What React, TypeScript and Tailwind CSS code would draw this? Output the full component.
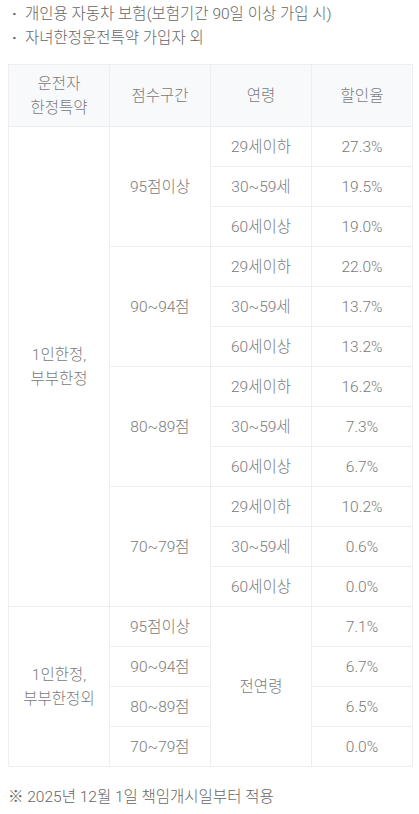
const FONT = "font-['Roboto','Noto_Sans_CJK_KR',sans-serif]";

type Row = { age: string; rate: string };
type Band = { score: string; rows: Row[] };

const ages = ["29세이하", "30~59세", "60세이상"];

const limitedBands: Band[] = [
  { score: "95점이상", rates: ["27.3%", "19.5%", "19.0%"] },
  { score: "90~94점", rates: ["22.0%", "13.7%", "13.2%"] },
  { score: "80~89점", rates: ["16.2%", "7.3%", "6.7%"] },
  { score: "70~79점", rates: ["10.2%", "0.6%", "0.0%"] },
].map(({ score, rates }) => ({
  score,
  rows: rates.map((rate, i) => ({ age: ages[i], rate })),
}));

const otherRows = [
  { score: "95점이상", rate: "7.1%" },
  { score: "90~94점", rate: "6.7%" },
  { score: "80~89점", rate: "6.5%" },
  { score: "70~79점", rate: "0.0%" },
];

const cell = "border border-[#eceef2] text-center align-middle h-10 p-0 font-light";

export default function App() {
  return (
    <div className={`${FONT} font-light bg-white text-[#7a7a7a] w-[419px] min-h-[814px] px-2 pt-[2px]`}>
      <ul className="text-[15.5px] leading-6 text-[#666]">
        <li className="flex">
          <span className="w-[17px] pl-[4px] font-bold">·</span>
          <span>개인용 자동차 보험(보험기간 90일 이상 가입 시)</span>
        </li>
        <li className="flex">
          <span className="w-[17px] pl-[4px] font-bold">·</span>
          <span>자녀한정운전특약 가입자 외</span>
        </li>
      </ul>

      <table className="mt-[14px] w-[404px] border-collapse table-fixed text-[15.5px] leading-6">
        <colgroup>
          <col className="w-[101px]" />
          <col className="w-[101px]" />
          <col className="w-[101px]" />
          <col className="w-[101px]" />
        </colgroup>
        <thead>
          <tr className="bg-[#f8f9fb] h-[62px]">
            <th className={cell + " h-[62px]"}>
              운전자
              <br />
              한정특약
            </th>
            <th className={cell + " h-[62px]"}>점수구간</th>
            <th className={cell + " h-[62px]"}>연령</th>
            <th className={cell + " h-[62px]"}>할인율</th>
          </tr>
        </thead>
        <tbody>
          {limitedBands.map((band, bi) =>
            band.rows.map((row, ri) => (
              <tr key={`${bi}-${ri}`}>
                {bi === 0 && ri === 0 ? (
                  <td className={cell} rowSpan={12}>
                    1인한정,
                    <br />
                    부부한정
                  </td>
                ) : null}
                {ri === 0 ? (
                  <td className={cell} rowSpan={3}>
                    {band.score}
                  </td>
                ) : null}
                <td className={cell}>{row.age}</td>
                <td className={cell}>{row.rate}</td>
              </tr>
            ))
          )}
          {otherRows.map((row, i) => (
            <tr key={`o-${i}`}>
              {i === 0 ? (
                <td className={cell} rowSpan={4}>
                  1인한정,
                  <br />
                  부부한정외
                </td>
              ) : null}
              <td className={cell}>{row.score}</td>
              {i === 0 ? (
                <td className={cell} rowSpan={4}>
                  전연령
                </td>
              ) : null}
              <td className={cell}>{row.rate}</td>
            </tr>
          ))}
        </tbody>
      </table>

      <p className="mt-[18px] text-[15.5px] leading-6 text-[#666]">
        ※ 2025년 12월 1일 책임개시일부터 적용
      </p>
    </div>
  );
}
